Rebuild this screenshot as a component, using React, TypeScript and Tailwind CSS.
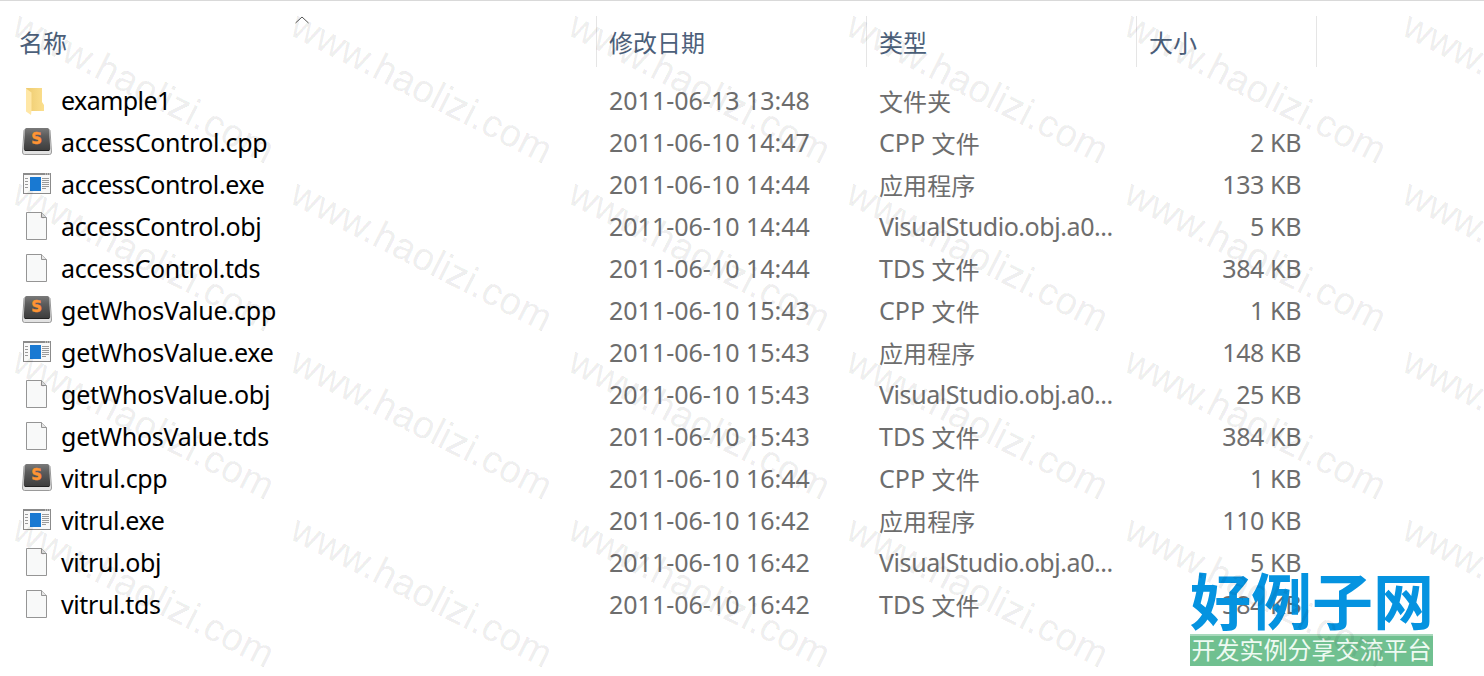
import { clsx } from "clsx"

type Kind = "folder" | "cpp" | "exe" | "doc"

type FileRow = {
  name: string
  kind: Kind
  date: string
  type: string
  size?: string
  nameSpacing: string
}

const files: FileRow[] = [
  { name: "example1", kind: "folder", date: "2011-06-13 13:48", type: "文件夹", nameSpacing: "tracking-[-0.6px]" },
  { name: "accessControl.cpp", kind: "cpp", date: "2011-06-10 14:47", type: "CPP 文件", size: "2 KB", nameSpacing: "tracking-[-0.36px]" },
  { name: "accessControl.exe", kind: "exe", date: "2011-06-10 14:44", type: "应用程序", size: "133 KB", nameSpacing: "tracking-[-0.38px]" },
  { name: "accessControl.obj", kind: "doc", date: "2011-06-10 14:44", type: "VisualStudio.obj.a0...", size: "5 KB", nameSpacing: "tracking-[-0.36px]" },
  { name: "accessControl.tds", kind: "doc", date: "2011-06-10 14:44", type: "TDS 文件", size: "384 KB", nameSpacing: "tracking-[-0.4px]" },
  { name: "getWhosValue.cpp", kind: "cpp", date: "2011-06-10 15:43", type: "CPP 文件", size: "1 KB", nameSpacing: "tracking-[-0.2px]" },
  { name: "getWhosValue.exe", kind: "exe", date: "2011-06-10 15:43", type: "应用程序", size: "148 KB", nameSpacing: "tracking-[-0.2px]" },
  { name: "getWhosValue.obj", kind: "doc", date: "2011-06-10 15:43", type: "VisualStudio.obj.a0...", size: "25 KB", nameSpacing: "tracking-[-0.2px]" },
  { name: "getWhosValue.tds", kind: "doc", date: "2011-06-10 15:43", type: "TDS 文件", size: "384 KB", nameSpacing: "tracking-[-0.25px]" },
  { name: "vitrul.cpp", kind: "cpp", date: "2011-06-10 16:44", type: "CPP 文件", size: "1 KB", nameSpacing: "tracking-[-0.35px]" },
  { name: "vitrul.exe", kind: "exe", date: "2011-06-10 16:42", type: "应用程序", size: "110 KB", nameSpacing: "tracking-[-0.4px]" },
  { name: "vitrul.obj", kind: "doc", date: "2011-06-10 16:42", type: "VisualStudio.obj.a0...", size: "5 KB", nameSpacing: "tracking-[-0.4px]" },
  { name: "vitrul.tds", kind: "doc", date: "2011-06-10 16:42", type: "TDS 文件", size: "384 KB", nameSpacing: "tracking-[-0.4px]" },
]

function FileIcon({ kind }: { kind: Kind }) {
  return (
    <svg width="32" height="32" viewBox="0 0 32 32" className="block shrink-0">
      <defs>
        <linearGradient id="folderBack" x1="0" x2="1">
          <stop offset="0" stopColor="#eecb70" />
          <stop offset="1" stopColor="#fbdf8e" />
        </linearGradient>
        <linearGradient id="keyCap" x1="0" y1="0" x2="0" y2="1">
          <stop offset="0" stopColor="#7a7a7a" />
          <stop offset=".35" stopColor="#5c5c5c" />
          <stop offset="1" stopColor="#3b3b3b" />
        </linearGradient>
      </defs>
      {kind === "folder" && (
        <>
          <path d="M5 4h16v14l2 3v6H9z" fill="url(#folderBack)" />
          <path d="M5 4.500l5.500 4v18l-.5 4.500-5-3.500z" fill="#ffe7a6" />
        </>
      )}
      {kind === "cpp" && (
        <>
          <path d="M5 2.500h22l2 2 1.500 21.500q0 2.500-2 2.500h-25q-2 0-2-2.500L3 4.500z" fill="#e2e2e2" stroke="#9a9a9a" />
          <path d="M6 2h20q2 0 2.200 2l1 19q0 2-2 2H4.800q-2 0-2-2l1-19q.2-2 2.200-2z" fill="url(#keyCap)" />
          <path d="M4 24.500h24" stroke="#222" />
          <text x="10.300" y="18" className="fill-[#ff9433] stroke-[#ff9433] stroke-[0.4px] font-['DejaVu_Sans',sans-serif] text-[15px] font-bold">S</text>
        </>
      )}
      {kind === "exe" && (
        <>
          <rect x="2.500" y="5.500" width="27" height="20" fill="#f8f8f8" stroke="#8b8b8b" />
          <path d="M2 6h28" stroke="#8b8b8b" strokeWidth="2" />
          <path d="M24 6h1m1 0h1m1 0h1" stroke="#e8e8e8" />
          <rect x="9" y="9" width="11" height="14" fill="#1979d2" />
          <path d="M4 10.500h3M4 13.500h3M4 16.500h3M4 19.500h3M21 10.500h7M21 12.500h7M21 14.500h7M21 16.500h7M21 18.500h7M21 20.500h4" stroke="#9b9b9b" />
        </>
      )}
      {kind === "doc" && (
        <>
          <path d="M5.500 2.500h15l5 5v22h-20z" fill="#f8f9f9" stroke="#959595" />
          <path d="M20.500 2.500v5h5" fill="#e6e6e6" stroke="#959595" />
        </>
      )}
    </svg>
  )
}

// Latin runs are set one pixel larger than the CJK ones
function MixedText({ text }: { text: string }) {
  return (
    <>
      {text.split(/([\u4e00-\u9fff]+)/).filter(Boolean).map((part, i) => (
        <span
          key={i}
          className={clsx(/[\u4e00-\u9fff]/.test(part) && "relative top-px text-[24px] tracking-[0.1px]", part.length > 10 && "tracking-[-0.43px]")}
        >
          {part}
        </span>
      ))}
    </>
  )
}

function Watermark() {
  return (
    <svg width="1484" height="676" className="pointer-events-none absolute inset-0">
      {[33, 201, 369, 537].map((y) =>
        [10, 288, 566, 844, 1122, 1400].map((x) => (
          <text
            key={`${x}-${y}`}
            transform={`translate(${x} ${y}) rotate(27)`}
            textLength="287"
            className="fill-black/7 stroke-black/4 stroke-[0.8px] font-['Liberation_Sans',sans-serif] text-[38.5px]"
          >
            www.haolizi.com
          </text>
        ))
      )}
    </svg>
  )
}

function SiteLogo() {
  return (
    <div className="absolute left-[1190px] top-[566px] w-[243px] font-['Noto_Sans_CJK_SC',sans-serif]">
      <div className="h-[67px] whitespace-nowrap text-[61px] leading-[63px] font-bold text-[#0593e0]">好例子网</div>
      <div className="h-[32px] whitespace-nowrap border-t-2 border-[#a8d9bc] bg-[#70c090] text-center text-[24px] leading-[25px] text-[#eefaf2]">开发实例分享交流平台</div>
    </div>
  )
}

export default function App() {
  return (
    <div className="relative h-[676px] w-[1484px] overflow-hidden border-t border-[#d9d9d9] bg-white font-['Noto_Sans','Noto_Sans_CJK_SC',sans-serif]">
      <div className="mt-[15px] flex h-[51px] text-[24px] leading-[53px] text-[#4c607a]">
        <div className="relative w-[597px] border-r border-[#e5e5e5] pl-[19px]">
          名称
          <svg width="14" height="8" className="absolute left-[295px] top-0">
            <path d="M.5 7 7 1l6.500 6" fill="none" stroke="#555" />
          </svg>
        </div>
        <div className="w-[270px] border-r border-[#e5e5e5] pl-[12px]">修改日期</div>
        <div className="w-[270px] border-r border-[#e5e5e5] pl-[12px]">类型</div>
        <div className="w-[180px] border-r border-[#e5e5e5] pl-[12px]">大小</div>
      </div>
      <div className="mt-[13px] text-[25px] text-[#6d6d6d]">
        {files.map((file) => (
          <div key={file.name} className="flex h-[42px] whitespace-nowrap leading-[40px]">
            <div className="flex w-[609px] pl-[21px] text-black">
              <div className="mr-[8px] pt-[4px]">
                <FileIcon kind={file.kind} />
              </div>
              <span className={file.nameSpacing}>{file.name}</span>
            </div>
            <div className="w-[270px]">{file.date}</div>
            <div className="w-[270px]"><MixedText text={file.type} /></div>
            <div className="w-[152px] text-right tracking-[-0.4px]">{file.size}</div>
          </div>
        ))}
      </div>
      <SiteLogo />
      <Watermark />
    </div>
  )
}
